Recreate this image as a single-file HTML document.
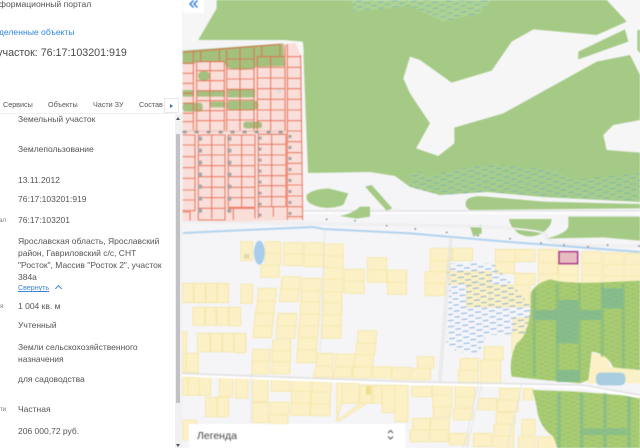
<!DOCTYPE html>
<html lang="ru"><head><meta charset="utf-8"><title>Участок</title>
<style>
html,body{margin:0;padding:0;width:640px;height:448px;overflow:hidden;background:#f5f5f8}
body{position:relative;font-family:"Liberation Sans","Noto Sans CJK SC",sans-serif;color:#555}
#map{position:absolute;left:0;top:0;filter:blur(.5px)}
#panel{position:absolute;left:0;top:0;width:182px;height:448px;background:#fff;overflow:hidden}
#panel div{position:absolute;white-space:nowrap;font-size:8.5px;line-height:12px}
.v{left:18px}
.tab{top:98.5px;font-size:7.2px!important}
.l{font-size:6px!important;color:#777}
</style></head><body>
<svg id="map" width="640" height="448" viewBox="0 0 640 448" xmlns="http://www.w3.org/2000/svg">
<defs>
<pattern id="w" width="42" height="18" patternUnits="userSpaceOnUse" patternTransform="rotate(-5)"><path d="M2 5h18M23 14h17" stroke="#5f9fd8" stroke-width="2.2" opacity=".7"/></pattern>
<pattern id="wb" width="42" height="18" patternUnits="userSpaceOnUse" patternTransform="rotate(-5)"><path d="M2 5h18M23 14h17" stroke="#4f92d8" stroke-width="2.4" opacity=".8"/></pattern>
<pattern id="w2" width="36" height="14" patternUnits="userSpaceOnUse" patternTransform="rotate(-3)"><path d="M2 4h15M20 11h14" stroke="#66a6a8" stroke-width="2" opacity=".6"/></pattern>
</defs>
<rect width="640" height="448" fill="#f5f5f8"/>
<polygon fill="#a5ca85" points="183,0 640,0 640,202 543,197 487,192 440,195 410,187 395,176 370,172 308,173 303,42 283,40 183,40"/>
<g transform="scale(.33333)">
 <g transform="translate(1230,0)">
  <polygon fill="#f6f6f7" points="0,170 30,180 125,248 245,212 305,125 370,88 560,105 650,65 590,0 690,0 690,225 660,165 560,185 280,340 133,383 133,430 85,468 18,445 60,370 0,280 -20,235"/>
  <polygon fill="#a5ca85" points="505,155 645,88 655,125 505,178"/>
  <polygon fill="#a5ca85" points="682,90 690,90 690,160 682,150"/>
  <polygon fill="#f6f6f7" points="580,405 610,375 690,360 690,458 590,450"/>
  <polygon fill="#add292" points="0,0 245,0 210,40 100,65 0,20"/>
  <polygon fill="url(#w)" points="0,0 245,0 210,40 100,65 0,20"/>
  <polygon fill="#a6cd8c" points="0,520 30,515 50,530 230,490 440,510 490,540 690,520 690,605 400,590 230,575 90,585 0,560"/>
  <polygon fill="url(#w)" points="0,520 30,515 50,530 230,490 440,510 490,540 690,520 690,605 400,590 230,575 90,585 0,560"/>
  <path fill="#a5ca85" d="M170 600Q185 585 230 590L400 605 690 612V625L180 630Q160 620 170 600Z"/>
  <path d="M-690 632H690" stroke="#dedede" stroke-width="3"/>
  <path d="M-690 640H690" stroke="#fff" stroke-width="4"/>
  <path fill="#a5ca85" d="M297 657H425Q425 680 395 700 360 718 325 700 300 680 297 657Z"/>
  <path fill="#a5ca85" d="M475 650H690V722L580 712 410 716Q470 700 475 680Z"/>
  <polygon fill="#a5ca85" points="180,680 215,675 215,700 190,710"/>
 </g>
 <g transform="translate(540,0)">
  <polygon fill="#add292" points="515,0 690,0 690,18 580,30 520,35"/>
  <polygon fill="url(#w)" points="515,0 690,0 690,18 580,30 520,35"/>
  <path fill="#a5ca85" d="M380 585Q395 568 445 565L505 580 490 615Q440 632 400 615 375 605 380 585Z"/>
  <polygon fill="#a5ca85" points="555,560 575,555 637,625 620,632"/>
  <path fill="#a5ca85" d="M480 648Q520 640 540 620H570V650L530 656Z"/>
  <polygon fill="#f6f6f7" points="-30,0 110,0 110,25 50,128 8,120 -30,120"/>
  <polygon fill="#f6f6f7" points="310,120 368,125 372,160 305,160"/>
  <polygon fill="#f9ded9" points="8,157 300,133 347,130 362,165 368,660 8,668"/>
  <path fill="#a3c07c" d="M8 152L310 130 314 198 232 200 222 206 180 210 140 203 133 186 50 186 40 192H8Z"/>
  <g fill="#a6c081">
   <ellipse cx="72" cy="228" rx="18" ry="16"/><path d="M8 270H42V290H8ZM50 272H135V290H50ZM142 268H225V292H142Z"/>
   <rect x="8" y="308" width="60" height="27" rx="10"/><rect x="88" y="305" width="48" height="17" rx="6"/><rect x="140" y="302" width="95" height="28" rx="10"/><rect x="190" y="365" width="56" height="20" rx="8"/>
  </g>
  <ellipse cx="297" cy="272" rx="8" ry="8" fill="#ddd"/>
  <g fill="none" stroke="#e8694d" stroke-width="2.6">
   <path d="M8 157L300 133M40 155V395M50 185V395M90 185V395M133 185V395M140 150V395M180 147V395M222 143V395M232 170V395M272 168V395M315 135V395M322 132V660M362 165L368 660M245 138V168M300 133V168M62 152V185M118 148V185M50 185H133M232 170H315"/>
   <path d="M8 190H40M8 220H40M50 212H133M8 250H40M50 242H133M8 280H40M50 272H133M8 310H40M50 302H133M8 340H40M50 332H133M8 365H40M50 362H133"/>
   <path d="M140 177H222M140 207H222M140 237H222M140 268H222M140 300H222M140 330H222M140 360H222"/>
   <path d="M232 202H315M232 234H315M232 266H315M232 298H315M232 330H315M232 362H315"/>
   <path d="M322 170H362M322 202H363M322 235H363M322 266H364M322 298H364M322 330H364M322 362H365M322 393H365M322 425H365M322 458H366M322 490H366M322 522H367M322 555H367M322 588H368M322 620H368M322 650H368"/>
   <path d="M8 405H45V632H8M8 435H45M8 470H45M8 503H45M8 535H45M8 570H45M8 600H45"/>
   <path d="M55 405H135V660H55ZM95 405V657M55 435H135M55 465H135M55 497H135M55 530H135M55 562H135M55 593H135M55 625H135"/>
   <path d="M145 405H225V622H145ZM185 405V622M145 435H225M145 465H225M145 497H225M145 530H225M145 562H225M145 593H225"/>
   <path d="M235 403H318V620H235ZM275 403V620M235 433H318M235 465H318M235 495H318M235 527H318M235 557H318M235 590H318"/>
   <path d="M8 636H30V665M145 625H225M160 625V660M225 625V655M235 620V655M280 620V650"/>
  </g>
  <path d="M8 394H320" stroke="#f2c8bf" stroke-width="4"/>
  <path d="M8 396H320" stroke="#a09a9a" stroke-width="8" stroke-dasharray="12 24"/>
  <path d="M60 410V660M148 410V660" stroke="#a8a4a4" stroke-width="12" stroke-dasharray="12 24"/>
  <path d="M240 410V660M330 405V660" stroke="#a8a4a4" stroke-width="9" stroke-dasharray="9 24"/>
 </g>
 <g transform="translate(540,660)">
  <path fill="#fbf0c6" stroke="#f5e6a8" stroke-width="2.5" d="M182 65H218V122H182ZM255 65H302V100H255ZM255 100H302V135H255ZM242 135H298V172H242ZM310 68H368V102H310ZM310 102H368V137H310ZM372 68H430V105H372ZM372 105H430V140H372ZM432 72H490V108H432ZM432 108H490V143H432ZM430 143H488V178H430ZM492 148H553V183H492ZM492 183H553V220H492ZM562 113H620V150H562ZM562 150H620V187H562ZM622 150H680V187H622ZM622 187H680V223H622ZM8 190H40V248H8ZM42 190H76V248H42ZM78 190H110V248H78ZM112 190H146V248H112ZM182 192H218V250H182ZM38 262H74V316H38ZM76 262H108V316H76ZM110 262H145V316H110ZM147 262H182V318H147ZM236 205H290L286 243H232ZM232 243H285L282 280H226ZM226 280H282L278 318H222ZM222 318H278L275 353H218ZM306 170H362L358 208H302ZM302 208H358L355 245H298ZM294 280H350L348 318H290ZM290 318H348L345 355H288ZM366 175H425L422 212H364ZM364 212H422L420 246H362ZM362 246H420L418 282H360ZM360 282H418L416 318H358ZM356 318H416L412 353H354ZM354 353H412L410 390H352ZM352 390H410V428H350ZM430 178H488V215H430ZM430 215H486V248H430ZM430 248H486V284H430ZM428 284H484V318H428ZM426 318H484V355H426ZM278 360H332V392H276ZM276 392H332V425H276ZM276 425H330V462H274ZM218 388H270V423H216ZM216 423H268V462H216ZM52 340H90V395H52ZM92 340H126V395H92ZM128 340H160V395H128ZM163 340H198V398H163ZM5 335H20V395H5ZM18 400H55V458H18ZM8 400H18V458H8ZM8 472H24V526H8ZM24 472H58V526H24ZM58 472H92V526H58ZM118 474H158V530H118ZM166 476H204V535H166ZM76 532H110V590H76ZM112 532H146V590H112ZM218 476H264V545H218ZM218 548H264V608H218ZM274 476H330V514H274ZM270 546H326V584H270ZM268 584H324V612H268ZM336 480H392V514H336ZM334 514H392V550H334ZM332 550H390V586H332ZM396 482H454V516H396ZM394 516H452V552H394ZM392 552H450V588H392ZM408 438H458V472H400ZM412 400H462L458 438H408ZM466 440H518L514 472H460ZM468 402H526L520 440H464ZM520 440H576L572 474H516ZM526 404H582L578 440H520ZM530 370H588L584 404H526ZM534 332H590L588 370H532ZM580 440H634V474H576ZM636 442H690V478H634ZM486 490H538V550H486ZM540 496H580V550H540ZM575 496H606V550H575ZM606 496H644V578H606ZM644 496H684V605H644ZM470 490H486V550L470 602ZM470 602L540 550H560L480 602ZM8 600H50V660H8Z"/>
  <rect x="558" y="498" width="15" height="26" fill="#efe08c"/>
  <ellipse cx="238" cy="98" rx="16" ry="36" fill="#a7cdeb"/>
  <rect x="192" y="102" width="16" height="14" fill="#e2dab0"/>
 </g>
 <g transform="translate(1230,660)">
  <path fill="#fbf0c6" stroke="#f5e6a8" stroke-width="2.5" d="M60 85H125V122H60ZM60 122H120V155H60ZM128 85H188V122H128ZM45 155H110V190H45ZM45 190H105V227H45ZM115 155H185V192H115ZM185 155H245V190H185ZM256 88H316V125H256ZM316 88H375V125H316ZM256 125H314V160H256ZM315 160H375V195H315ZM385 88H445V128H385ZM385 128H443V162H385ZM445 130H505V165H445ZM515 95H575V130H515ZM515 130H575V165H515ZM580 98H640V133H580ZM580 133H640V168H580ZM645 100H690V133H645ZM645 133H690V168H645ZM385 162H445V195H385ZM445 165H505V195H445ZM515 165H575V195H515ZM580 168H640V195H580ZM645 168H690V195H645ZM170 195H240V260H170ZM240 195H360V260H240ZM310 295H365V340H310ZM305 340H365V400H305ZM5 500H65V530H5ZM68 495H125V525H68ZM68 525H125V560H68ZM70 560H122V590H70ZM62 595H118V630H62ZM60 630H115V665H60ZM8 595H60V630H8ZM0 630H55V665H0ZM135 495H195V530H135ZM135 530H190V565H135ZM130 565H190V600H130ZM118 640H175V675H118ZM205 535H260V570H205ZM268 505H330V540H268ZM262 540H325V575H262ZM258 578H315V612H258ZM252 612H312V648H252ZM250 648H310V684H250ZM190 640H245V680H190ZM335 598H375V645H335ZM325 650H375V684H325ZM340 505H368V540H340ZM382 650H440V684H382ZM22 410H72V445H22ZM5 445H62V480H5ZM150 415H205V450H150ZM145 450H205V490H145ZM222 380H280V420H222ZM212 420H272V490H212Z"/>
  <path d="M535 400L590 405 600 440 690 450V490H530Z" fill="#fbf0c6"/>
  <polygon fill="url(#wb)" points="110,130 250,130 365,260 365,340 230,345 205,405 140,395 110,370 118,200"/>
  <path fill="#aacc6e" d="M362 225Q365 195 420 178 460 190 560 188L690 182V450L610 442Q590 400 545 395L535 480 510 490 400 480 305 470Q295 420 320 370 365 340 362 225Z"/>
  <path fill="#8cbc7c" opacity=".7" d="M368 210H378V470H368ZM437 190H447V480H437ZM505 190H512V480H505ZM572 190H582V410H572ZM635 190H645V445H635Z"/>
  <path fill="#88bd8a" d="M445 240H505V270H445ZM370 270H575V300H370ZM440 300H505V370H440ZM575 205H640V265H575ZM440 450H510V486H440Z"/>
  <path fill="url(#w2)" d="M362 225Q365 195 420 178 460 190 560 188L690 182V450L610 442Q590 400 545 395L535 480 510 490 400 480 305 470Q295 420 320 370 365 340 362 225Z"/>
  <rect x="558" y="458" width="88" height="38" rx="14" fill="#a9cde0"/>
  <path fill="#aacc6e" d="M368 510L500 515 690 530V690H445L430 650Q385 620 380 560Z"/>
  <path fill="#88bd8a" opacity=".85" d="M442 520H452V690H442ZM510 520H520V690H510ZM580 520H590V690H580ZM652 530H662V690H652ZM520 625H650V645H520Z"/>
  <path fill="url(#w2)" d="M368 510L500 515 690 530V690H445L430 650Q385 620 380 560Z"/>
  <rect x="447" y="95" width="56" height="36" fill="#e6bcc0" stroke="#a92d88" stroke-width="4"/>
 </g>
 <g fill="none">
  <path d="M540 665Q800 670 1230 675T1640 710 1920 738" stroke="#dedee0" stroke-width="6"/>
  <path d="M540 665Q800 670 1230 675T1640 710 1920 738" stroke="#fafafa" stroke-width="3"/>
  <path d="M549 699L740 690 940 681 970 687 1230 700 1530 726 1920 756" stroke="#b2d2ee" stroke-width="6"/>
  <path d="M1350 712L1316 1150M1356 712L1322 1150" stroke="#e2e2e2" stroke-width="3"/>
  <path d="M540 1120L1230 1145 1750 1155 1920 1185" stroke="#e0e0e0" stroke-width="4"/>
  <path d="M540 1127L1230 1152 1750 1162 1920 1192" stroke="#fff" stroke-width="6"/>
  <path d="M1445 1155L1400 1344M1565 1155L1520 1344M1435 1155L1390 1344" stroke="#e6e6e6" stroke-width="3"/>
  <path d="M753 1120V1270M960 1055L975 690" stroke="#e6e6e6" stroke-width="3"/>
 </g>
 <g fill="#777">
  <circle cx="1246" cy="687" r="2.5"/><circle cx="1340" cy="697" r="2.5"/><circle cx="1434" cy="707" r="2.5"/><circle cx="1530" cy="716" r="2.5"/><circle cx="1623" cy="729" r="2.5"/><circle cx="1692" cy="735" r="2.5"/><circle cx="1764" cy="740" r="2.5"/><circle cx="1823" cy="735" r="2.5"/><circle cx="1917" cy="738" r="2.5"/><circle cx="1160" cy="677" r="2.5"/><circle cx="1065" cy="662" r="2.5"/><circle cx="980" cy="658" r="2.5"/>
 </g>
</g>
<rect x="183" y="0" width="21" height="13" rx="2" fill="#fff"/>
<path d="M193.5 0L190 3.5 193.5 7M197.5 0L194 3.5 197.5 7" transform="translate(0,.5)" fill="none" stroke="#2a78d6" stroke-width="1.4"/>
<rect x="189" y="424" width="216" height="24" fill="#fff"/>
<text x="197" y="439" font-family="Liberation Sans, sans-serif" font-size="10.5" fill="#444">Легенда</text>
<path d="M388 433L390.5 430.5 393 433M388 436.5L390.5 439 393 436.5" fill="none" stroke="#555" stroke-width="1"/>
</svg>
<div id="panel" style="filter:blur(.25px)">
 <div style="left:-12px;top:-2px;font-size:8.6px">Информационный портал</div>
 <div style="left:-13px;top:26px;font-size:8.6px;color:#2f86dc">Выделенные объекты</div>
 <div style="left:-62.5px;top:46px;font-size:10.7px;line-height:14px;color:#4a4a4a">Земельный участок: 76:17:103201:919</div>
 <div class="tab" style="left:3px">Сервисы</div>
 <div class="tab" style="left:48px">Объекты</div>
 <div class="tab" style="left:93px">Части ЗУ</div>
 <div class="tab" style="left:139px">Состав</div>
 <div style="left:164px;top:98px;width:15px;height:15px;background:#fff;border:1px solid #e8e8ee;box-sizing:border-box"></div>
 <div style="left:170px;top:104px;width:0;height:0;border-left:3px solid #3a6aa8;border-top:2px solid transparent;border-bottom:2px solid transparent"></div>
 <div style="left:0;top:113px;width:176px;height:1px;background:#f0f0f0"></div>
 <div style="left:175px;top:114px;width:7px;height:334px;background:#f1f1f1"></div>
 <div style="left:176px;top:134px;width:4px;height:269px;background:#c2c2c4"></div>
 <div style="left:176px;top:117px;width:0;height:0;border-left:2.5px solid transparent;border-right:2.5px solid transparent;border-bottom:3px solid #555"></div>
 <div style="left:176px;top:444px;width:0;height:0;border-left:2.5px solid transparent;border-right:2.5px solid transparent;border-top:3px solid #555"></div>
 <div class="v" style="top:113px">Земельный участок</div>
 <div class="v" style="top:143px">Землепользование</div>
 <div class="v" style="top:174px">13.11.2012</div>
 <div class="v" style="top:193px">76:17:103201:919</div>
 <div class="l" style="left:-1px;top:215px">ал</div>
 <div class="v" style="top:214px">76:17:103201</div>
 <div class="v" style="top:235px;line-height:12px">Ярославская область, Ярославский<br>район, Гавриловский с/с, СНТ<br>"Росток", Массив "Росток 2", участок<br>384а</div>
 <div class="v" style="top:282px;font-size:7.1px;color:#3b82d6;text-decoration:underline">Свернуть</div>
 <div style="left:55.5px;top:286px;width:4px;height:4px;border-left:1px solid #3b82d6;border-top:1px solid #3b82d6;transform:rotate(45deg)"></div>
 <div class="l" style="left:0;top:301px">я</div>
 <div class="v" style="top:300px">1 004 кв. м</div>
 <div class="v" style="top:319px">Учтенный</div>
 <div class="v" style="top:341px">Земли сельскохозяйственного<br>назначения</div>
 <div class="v" style="top:373px">для садоводства</div>
 <div class="l" style="left:0;top:404px">ти</div>
 <div class="v" style="top:403px">Частная</div>
 <div class="v" style="top:425px">206 000,72 руб.</div>
</div>
</body></html>
